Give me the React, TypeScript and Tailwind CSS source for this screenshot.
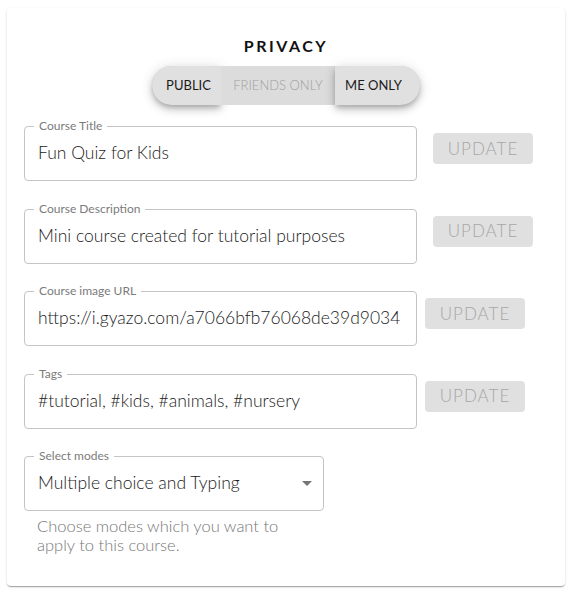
import React from 'react';

const fields = [
  { label: 'Course Title', value: 'Fun Quiz for Kids', btn: 'ml-[16px]' },
  { label: 'Course Description', value: 'Mini course created for tutorial purposes', btn: 'ml-[16px]' },
  { label: 'Course image URL', value: 'https://i.gyazo.com/a7066bfb76068de39d9034', btn: 'ml-[8px]' },
  { label: 'Tags', value: '#tutorial, #kids, #animals, #nursery', btn: 'ml-[8px]' },
];

const Outlined = ({ label, width, children }: { label: string; width: string; children: React.ReactNode }) => (
  <div className={`relative h-[55px] ${width} shrink-0 rounded-[4px] border border-[#c4c4c4] flex items-center pl-[13px] pr-3`}>
    <span className="absolute -top-[9px] left-[9px] bg-white px-[5px] text-[12px] leading-[16px] text-[#7b7b7b]">
      {label}
    </span>
    {children}
  </div>
);

const App = () => {
  return (
    <div className="w-[571px] h-[596px] bg-white pt-2 pl-[7px] font-['Lato',sans-serif]">
      <div className="w-[558px] h-[578px] rounded-[4px] bg-white shadow-[0_2px_1px_-1px_rgba(0,0,0,0.2),0_1px_1px_0_rgba(0,0,0,0.14),0_1px_3px_0_rgba(0,0,0,0.12)] pt-[28px]">
        <h2 className="text-center text-[16px] font-bold tracking-[2.5px] text-[#111] leading-[20px]">PRIVACY</h2>
        <div className="mx-auto mt-[10px] flex h-[39px] w-fit rounded-full bg-[#e0e0e0] text-[13px]">
          <button className="h-full w-[69px] rounded-l-full bg-[#e0e0e0] pl-1 text-[#1a1a1a] shadow-[0_3px_5px_-1px_rgba(0,0,0,0.2),0_5px_8px_0_rgba(0,0,0,0.14),0_1px_14px_0_rgba(0,0,0,0.12)]">
            PUBLIC
          </button>
          <button className="h-full w-[114px] bg-[#dcdcdc] font-light text-[#9f9f9f]">FRIENDS ONLY</button>
          <button className="h-full w-[85px] rounded-r-full bg-[#e0e0e0] pr-2 text-[#1a1a1a] shadow-[0_3px_5px_-1px_rgba(0,0,0,0.2),0_5px_8px_0_rgba(0,0,0,0.14),0_1px_14px_0_rgba(0,0,0,0.12)]">
            ME ONLY
          </button>
        </div>

        <div className="mt-[21px] flex flex-col gap-[27.5px] pl-[17px]">
          {fields.map((f) => (
            <div key={f.label} className="flex items-start">
              <Outlined label={f.label} width="w-[393px]">
                <span className="truncate text-[17.5px] font-light text-[#1a1a1a]">{f.value}</span>
              </Outlined>
              <button
                className={`${f.btn} mt-[7px] h-[31px] w-[100px] rounded-[4px] bg-[#e0e0e0] text-[17px] font-light tracking-[1px] text-[#a6a6a6]`}
              >
                UPDATE
              </button>
            </div>
          ))}

          <div>
            <Outlined label="Select modes" width="w-[300px]">
              <span className="flex-1 text-[17.5px] font-light text-[#1a1a1a]">Multiple choice and Typing</span>
              <svg width="10" height="5" viewBox="0 0 10 5" className="mr-[-1px]">
                <path d="M0 0 L5 5 L10 0 Z" fill="#757575" />
              </svg>
            </Outlined>
            <p className="mt-[6px] pl-[13px] w-[280px] text-[16.5px] font-light leading-[19px] text-[#777]">
              Choose modes which you want to apply to this course.
            </p>
          </div>
        </div>
      </div>
    </div>
  );
};

export default App;
